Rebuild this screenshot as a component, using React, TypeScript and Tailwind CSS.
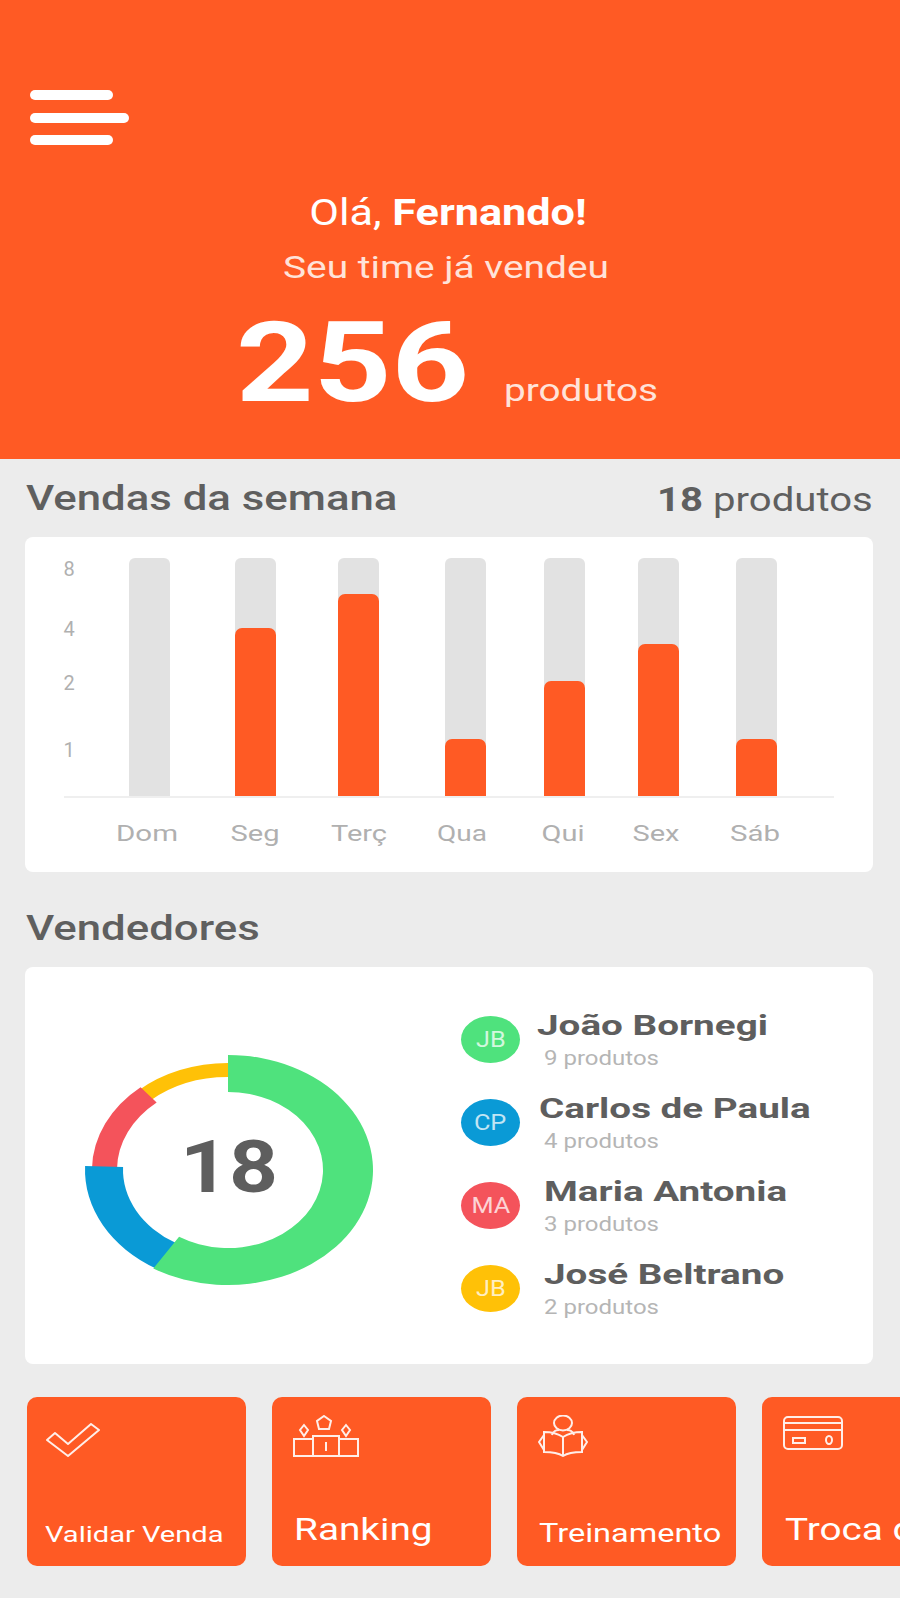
// App.tsx
import React from "react";

const ORANGE = "#ff5a24";

interface Day {
  label: string;
  labelX: number;
  labelWidth: number;
  x: number;
  top?: number;
}

const days: Day[] = [
  { label: "Dom", labelX: 147, labelWidth: 62, x: 129 },
  { label: "Seg", labelX: 255, labelWidth: 49, x: 235, top: 628 },
  { label: "Terç", labelX: 359, labelWidth: 56, x: 338, top: 594 },
  { label: "Qua", labelX: 462, labelWidth: 50, x: 445, top: 739 },
  { label: "Qui", labelX: 563, labelWidth: 43, x: 544, top: 681 },
  { label: "Sex", labelX: 656, labelWidth: 47, x: 638, top: 644 },
  { label: "Sáb", labelX: 755, labelWidth: 50, x: 736, top: 739 },
];

const scale = [
  { value: "8", y: 576 },
  { value: "4", y: 636 },
  { value: "2", y: 690 },
  { value: "1", y: 757 },
];

const sellers = [
  { initials: "JB", name: "João Bornegi", sold: "9 produtos", color: "bg-[#4fe27d]", nameClass: "ml-[17px]" },
  { initials: "CP", name: "Carlos de Paula", sold: "4 produtos", color: "bg-[#0a9ad6]", nameClass: "ml-[19px]" },
  { initials: "MA", name: "Maria Antonia", sold: "3 produtos", color: "bg-[#f4535b]", nameClass: "ml-[24px]" },
  { initials: "JB", name: "José Beltrano", sold: "2 produtos", color: "bg-[#ffc107]", nameClass: "ml-[24px]" },
];

// arc band on an ellipse, angles clockwise from 12 o'clock
const band = (
  from: number,
  to: number,
  rx: number,
  ry: number,
  irx: number,
  iry: number,
) => {
  const cx = 228;
  const cy = 1170;
  const pt = (a: number, x: number, y: number) => {
    const r = (a * Math.PI) / 180;
    return `${cx + x * Math.sin(r)} ${cy - y * Math.cos(r)}`;
  };
  const large = to - from > 180 ? 1 : 0;
  return `M${pt(from, rx, ry)} A${rx} ${ry} 0 ${large} 1 ${pt(to, rx, ry)} L${pt(to, irx, iry)} A${irx} ${iry} 0 ${large} 0 ${pt(from, irx, iry)} Z`;
};

const WeekChart = () => (
  <svg viewBox="25 537 848 335" className="block w-full h-full">
    {days.map((d) => (
      <g key={d.label}>
        <path
          d={`M${d.x} 797 V564 a6 6 0 0 1 6 -6 h29 a6 6 0 0 1 6 6 V797 Z`}
          fill="#e2e2e2"
        />
        {d.top && (
          <path
            d={`M${d.x} 797 V${d.top + 7} a7 7 0 0 1 7 -7 h27 a7 7 0 0 1 7 7 V797 Z`}
            fill={ORANGE}
          />
        )}
        <text
          x={d.labelX}
          y={841}
          textAnchor="middle"
          fontSize={22}
          fill="#b0b0b0"
          fontFamily="Roboto, sans-serif"
          textLength={d.labelWidth}
          lengthAdjust="spacingAndGlyphs"
        >
          {d.label}
        </text>
      </g>
    ))}
    <rect x={64} y={796} width={770} height={2} fill="#efefef" />
    {scale.map((s) => (
      <text
        key={s.value}
        x={69}
        y={s.y}
        textAnchor="middle"
        fontSize={20}
        fill="#b0b0b0"
        fontFamily="Roboto, sans-serif"
      >
        {s.value}
      </text>
    ))}
  </svg>
);

const Donut = () => (
  <svg viewBox="25 967 421 397" className="block w-[421px] h-[397px] shrink-0">
    <path d={band(318, 360, 134, 107, 117, 93)} fill="#ffc107" />
    <path d={band(271, 320, 136, 108, 111, 88)} fill="#f4535b" />
    <path d={band(210, 272, 143, 114, 105, 84)} fill="#0a9ad6" />
    <path d={band(0, 211, 145, 115, 95, 78)} fill="#4fe27d" />
    <text
      x={229}
      y={1192}
      textAnchor="middle"
      fontSize={72}
      fontWeight={700}
      fill="#5e5e5e"
      fontFamily="Roboto, sans-serif"
      textLength={98}
      lengthAdjust="spacingAndGlyphs"
    >
      18
    </text>
  </svg>
);

const CheckIcon = () => (
  <svg width="54" height="34" viewBox="0 0 54 34" fill="none" stroke="#fff" strokeWidth="2" className="ml-[19px] mt-[26px] opacity-90">
    <path d="M45 1 L53 7 L22 33 L1 17 L9 10 L22 21 Z" strokeLinejoin="round" />
  </svg>
);

const PodiumIcon = () => (
  <svg width="66" height="42" viewBox="0 0 66 42" fill="none" stroke="#fff" strokeWidth="2" className="ml-[21px] mt-[18px] opacity-90">
    <path d="M31 1 L38 6 L36 14 H26 L24 6 Z" />
    <path d="M11 10 L15 15 L11 21 L7 15 Z" />
    <path d="M53 10 L57 15 L53 21 L49 15 Z" />
    <path d="M1 24 H20 V41 H1 Z" />
    <path d="M20 21 H46 V41 H20 Z" />
    <path d="M46 24 H65 V41 H46 Z" />
    <path d="M33 27 V36" />
  </svg>
);

const ReaderIcon = () => (
  <svg width="50" height="42" viewBox="0 0 50 42" fill="none" stroke="#fff" strokeWidth="2" className="ml-[21px] mt-[18px] opacity-90">
    <ellipse cx="25" cy="8" rx="9" ry="7.5" />
    <path d="M14 20 C15 16 19 15 21 15 M36 20 C35 16 31 15 29 15" />
    <path d="M25 22 C19 18 12 17 6 17 V37 C12 37 19 37 25 41 C31 37 38 37 44 37 V17 C38 17 31 18 25 22 Z" />
    <path d="M25 22 V41" />
    <path d="M6 20 L1 27 L6 35 M44 20 L49 27 L44 35" />
  </svg>
);

const CardIcon = () => (
  <svg width="60" height="34" viewBox="0 0 60 34" fill="none" stroke="#fff" strokeWidth="2" className="ml-[21px] mt-[19px] opacity-90">
    <rect x="1" y="1" width="58" height="32" rx="4" />
    <path d="M1 7 H59 M1 14 H59" />
    <path d="M10 22 H22 V27 H10 Z" />
    <ellipse cx="46" cy="24" rx="3" ry="4" />
  </svg>
);

const tiles = [
  { label: "Validar Venda", icon: <CheckIcon />, textClass: "ml-[18px] mb-[20px] text-[22px] scale-x-[1.32]" },
  { label: "Ranking", icon: <PodiumIcon />, textClass: "ml-[22px] mb-[21px] text-[31px] scale-x-[1.25]" },
  { label: "Treinamento", icon: <ReaderIcon />, textClass: "ml-[22px] mb-[20px] text-[26px] scale-x-[1.25]" },
  { label: "Troca de Pontos", icon: <CardIcon />, textClass: "ml-[23px] mb-[21px] text-[31px] scale-x-[1.25]" },
];

export default function App() {
  return (
    <div className="w-[900px] h-[1598px] overflow-hidden bg-[#ececec] font-['Roboto',sans-serif]">
      <header className="h-[459px] bg-[#ff5a24] text-white pt-[90px]">
        <div className="pl-[30px] flex flex-col gap-[12.5px]">
          <div className="w-[83px] h-[10px] rounded-full bg-white" />
          <div className="w-[99px] h-[10px] rounded-full bg-white" />
          <div className="w-[83px] h-[10px] rounded-full bg-white" />
        </div>
        <div className="w-[896px] mt-[48px] text-center text-[36px] leading-[40px] scale-x-[1.2]">
          Olá, <b className="font-bold">Fernando!</b>
        </div>
        <div className="w-[892px] mt-[14px] text-center text-[32px] leading-[40px] text-[#ffe3d9] scale-x-[1.215]">
          Seu time já vendeu
        </div>
        <div className="flex items-baseline mt-[20px] pl-[236px]">
          <span className="text-[112px] leading-[112px] font-bold origin-left scale-x-[1.21]">256</span>
          <span className="ml-[75px] text-[32px] leading-[40px] text-[#ffe3d9] origin-left scale-x-[1.21]">produtos</span>
        </div>
      </header>

      <section className="pl-[25px] pr-[27px] pt-[20px]">
        <div className="flex items-start justify-between text-[#5f5f5f]">
          <h2 className="ml-[1px] text-[35px] leading-[40px] font-medium origin-left scale-x-[1.25]">Vendas da semana</h2>
          <p className="text-[34px] leading-[40px] origin-right scale-x-[1.18]">
            <b className="font-bold">18</b> produtos
          </p>
        </div>
        <div className="mt-[18px] h-[335px] rounded-lg bg-white">
          <WeekChart />
        </div>
      </section>

      <section className="pl-[25px] pr-[27px] pt-[37px]">
        <h2 className="ml-[1px] text-[35px] leading-[40px] font-medium text-[#5f5f5f] origin-left scale-x-[1.25]">Vendedores</h2>
        <div className="mt-[18px] h-[397px] rounded-lg bg-white flex">
          <Donut />
          <ul className="pl-[15px] pt-[43px]">
            {sellers.map((s) => (
              <li key={s.name} className="h-[83px] flex">
                <div className={`mt-[6px] w-[59px] h-[47px] shrink-0 rounded-[50%] flex items-center justify-center text-white/75 ${s.color}`}>
                  <span className="text-[22px] scale-x-[1.15]">{s.initials}</span>
                </div>
                <div>
                  <div className={`text-[28px] leading-[32px] font-bold text-[#5e5e5e] whitespace-nowrap origin-left scale-x-[1.38] ${s.nameClass}`}>{s.name}</div>
                  <div className="ml-[24px] mt-[4px] text-[20px] leading-[24px] text-[#b5b5b5] whitespace-nowrap origin-left scale-x-[1.2]">{s.sold}</div>
                </div>
              </li>
            ))}
          </ul>
        </div>
      </section>

      <nav className="flex gap-[26px] pl-[27px] mt-[33px]">
        {tiles.map((t) => (
          <div key={t.label} className="w-[219px] h-[169px] shrink-0 rounded-[10px] bg-[#ff5a24] text-white flex flex-col">
            {t.icon}
            <span className={`mt-auto leading-none whitespace-nowrap origin-left ${t.textClass}`}>{t.label}</span>
          </div>
        ))}
      </nav>
    </div>
  );
}
